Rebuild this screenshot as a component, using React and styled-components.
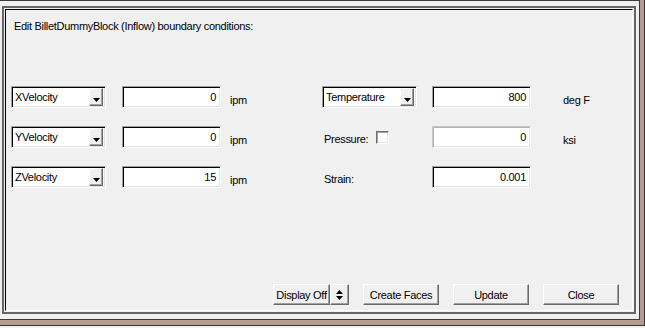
import React from "react";
import styled, { createGlobalStyle } from "styled-components";

const Global = createGlobalStyle`
  html, body { margin: 0; padding: 0; background: #f0f0f0; }
  body { font-family: "Liberation Sans", Arial, sans-serif; }
  #root { width: 645px; height: 328px; overflow: hidden; }
`;

const Desk = styled.div`
  box-sizing: border-box;
  width: 645px;
  height: 326px;
  background: #b69b93;
  border-right: 1px solid #3c3434;
  border-bottom: 1px solid #3c3434;
  padding: 0 4px 5px 0;
  display: flex;
`;

const Window = styled.div`
  box-sizing: border-box;
  flex: 1;
  background: #f0f0f0;
  border-top: 1px solid #3c3c3c;
  border-right: 1px solid #3c3c3c;
  border-bottom: 1px solid #3c3c3c;
  padding: 5px 3px 5px 2px;
  display: flex;
`;

const Frame = styled.div`
  box-sizing: border-box;
  flex: 1;
  border: 2px solid #666666;
  padding: 1px;
  display: flex;
`;

const Panel = styled.div`
  box-sizing: border-box;
  flex: 1;
  background: #f0f0f0;
  border-top: 1px solid #000;
  border-left: 1px solid #000;
  border-right: 1px solid #fff;
  border-bottom: 1px solid #fff;
  padding: 10px 13px 4px 5px;
  display: flex;
  flex-direction: column;
  font-size: 11px;
  letter-spacing: -0.3px;
  color: #000;
`;

const Title = styled.div`
  line-height: 13px;
  padding-left: 3px;
`;

const Grid = styled.div`
  margin-top: 53px;
  display: grid;
  grid-template-columns: 111px 108px 92px 110px 131px 1fr;
  grid-auto-rows: 22px;
  row-gap: 18px;
  align-items: stretch;
`;

const Combo = styled.div`
  box-sizing: border-box;
  width: 95px;
  height: 22px;
  background: #fff;
  border-top: 1px solid #a0a0a0;
  border-left: 1px solid #a0a0a0;
  border-right: 1px solid #fff;
  border-bottom: 1px solid #fff;
  box-shadow: inset 1px 1px 0 #000, inset -1px -1px 0 #e3e3e3;
  display: flex;
  align-items: center;
  padding: 2px;
`;

const ComboText = styled.span`
  flex: 1;
  padding-left: 1px;
  line-height: 16px;
`;

const ArrowBtn = styled.div`
  box-sizing: border-box;
  width: 14px;
  height: 18px;
  background: #f0f0f0;
  border-top: 1px solid #fff;
  border-left: 1px solid #fff;
  border-right: 1px solid #696969;
  border-bottom: 1px solid #696969;
  box-shadow: inset -1px -1px 0 #a0a0a0;
  display: flex;
  align-items: flex-end;
  justify-content: center;
  padding-bottom: 3px;
`;

const Field = styled.div`
  box-sizing: border-box;
  width: 99px;
  height: 22px;
  background: #fff;
  border-top: 1px solid ${(p) => (p.$disabled ? "#c8c8c8" : "#a0a0a0")};
  border-left: 1px solid ${(p) => (p.$disabled ? "#c8c8c8" : "#a0a0a0")};
  border-right: 1px solid #fff;
  border-bottom: 1px solid #fff;
  box-shadow: ${(p) =>
    p.$disabled
      ? "inset 1px 1px 0 #b4b4b4, inset -1px -1px 0 #e3e3e3"
      : "inset 1px 1px 0 #000, inset -1px -1px 0 #e3e3e3"};
  text-align: right;
  padding: 0 4px;
  line-height: 20px;
`;

const Unit = styled.div`
  padding-left: ${(p) => p.$pad || 0}px;
  line-height: 22px;
  padding-top: 3px;
`;

const Label = styled.div`
  display: flex;
  align-items: center;
  padding-top: 3px;
  padding-left: 2px;
  gap: 8px;
`;

const Check = styled.span`
  box-sizing: border-box;
  width: 13px;
  height: 13px;
  margin-top: -3px;
  background: #fff;
  border-top: 1px solid #6e6e6e;
  border-left: 1px solid #6e6e6e;
  border-right: 1px solid #fff;
  border-bottom: 1px solid #fff;
  box-shadow: inset 1px 1px 0 #a0a0a0, inset -1px -1px 0 #e3e3e3;
`;

const Buttons = styled.div`
  margin-top: auto;
  display: flex;
  justify-content: flex-end;
  gap: 14px;
  padding-bottom: 1px;
`;

const Group = styled.div`
  display: flex;
`;

const Button = styled.div`
  box-sizing: border-box;
  width: ${(p) => p.$w}px;
  height: 21px;
  background: #f0f0f0;
  border-top: 1px solid #fff;
  border-left: 1px solid #fff;
  border-right: 1px solid #696969;
  border-bottom: 1px solid #696969;
  box-shadow: inset -1px -1px 0 #a0a0a0;
  display: flex;
  align-items: center;
  justify-content: center;
  line-height: 18px;
  white-space: nowrap;
`;

const DownArrow = () => (
  <svg width="7" height="4" viewBox="0 0 7 4">
    <path d="M0 0h7L3.5 4z" fill="#000" />
  </svg>
);

const UpDown = () => (
  <svg width="7" height="10" viewBox="0 0 7 10">
    <path d="M3.5 0L7 4H0z M0 6h7L3.5 10z" fill="#000" />
  </svg>
);

const ComboBox = ({ label }) => (
  <Combo>
    <ComboText>{label}</ComboText>
    <ArrowBtn>
      <DownArrow />
    </ArrowBtn>
  </Combo>
);

export default function App() {
  return (
    <>
      <Global />
      <Desk>
        <Window>
          <Frame>
            <Panel>
              <Title>Edit BilletDummyBlock (Inflow) boundary conditions:</Title>
              <Grid>
                <ComboBox label="XVelocity" />
                <Field>0</Field>
                <Unit>ipm</Unit>
                <ComboBox label="Temperature" />
                <Field>800</Field>
                <Unit>deg F</Unit>

                <ComboBox label="YVelocity" />
                <Field>0</Field>
                <Unit>ipm</Unit>
                <Label>
                  Pressure: <Check />
                </Label>
                <Field $disabled>0</Field>
                <Unit>ksi</Unit>

                <ComboBox label="ZVelocity" />
                <Field>15</Field>
                <Unit>ipm</Unit>
                <Label>Strain:</Label>
                <Field>0.001</Field>
                <Unit />
              </Grid>
              <Buttons>
                <Group>
                  <Button $w={57}>Display Off</Button>
                  <Button $w={19}>
                    <UpDown />
                  </Button>
                </Group>
                <Button $w={76}>Create Faces</Button>
                <Button $w={76}>Update</Button>
                <Button $w={76}>Close</Button>
              </Buttons>
            </Panel>
          </Frame>
        </Window>
      </Desk>
    </>
  );
}
